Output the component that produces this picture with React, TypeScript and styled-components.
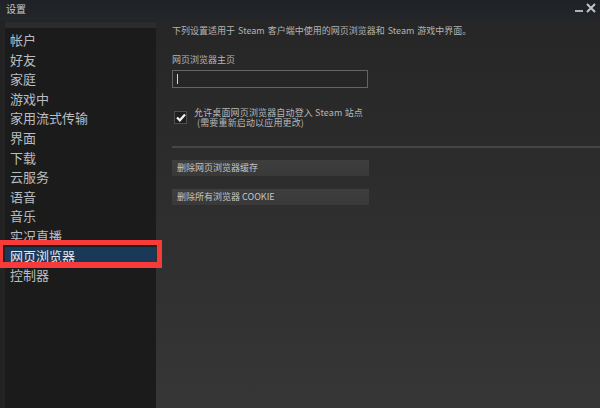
import React, { useState } from "react";
import styled, { createGlobalStyle } from "styled-components";

const GlobalStyle = createGlobalStyle`
  html, body {
    margin: 0;
    padding: 0;
    background: #232323;
  }
  body {
    font-family: "Noto Sans CJK SC", "Noto Sans", "Liberation Sans", sans-serif;
  }
`;

const Window = styled.div`
  position: relative;
  width: 600px;
  height: 408px;
  display: flex;
  flex-direction: column;
  background: #232323;
  overflow: hidden;
`;

const TitleBar = styled.div`
  height: 21px;
  flex-shrink: 0;
  display: flex;
  align-items: center;
  padding: 0 3px 0 6px;
  background: linear-gradient(#1e2125, #24262a);
`;

const Title = styled.div`
  flex: 1;
  font-size: 10px;
  color: #c8c8c8;
  line-height: 1;
  margin-top: -3px;
`;

const TitleButton = styled.button`
  width: 12px;
  height: 12px;
  padding: 0;
  border: none;
  background: transparent;
  display: flex;
  align-items: center;
  justify-content: center;
  cursor: pointer;
  margin-top: -6px;
`;

const Body = styled.div`
  flex: 1;
  display: flex;
  padding-left: 5px;
`;

const Sidebar = styled.div`
  width: 151px;
  flex-shrink: 0;
  display: flex;
  flex-direction: column;
  background: #1b1b1b;
  border-top: 6px solid #2c2c2c;
  margin-top: 1px;
  padding-top: 3px;
  gap: 2.6px;
`;

const NavItem = styled.div<{ $active?: boolean }>`
  height: 17px;
  display: flex;
  align-items: center;
  padding-left: 5px;
  font-size: 13px;
  color: ${(p) => (p.$active ? "#e4e6e8" : "#b9bdc1")};
  background: ${(p) => (p.$active ? "#1a3857" : "transparent")};
  cursor: pointer;
  white-space: nowrap;
`;

const Highlight = styled.div`
  position: absolute;
  left: 0;
  top: 240px;
  width: 162px;
  height: 28px;
  box-sizing: border-box;
  border: 5px solid #f83a3a;
  border-left-width: 3px;
  border-bottom-width: 6px;
  pointer-events: none;
`;

const Content = styled.div`
  flex: 1;
  display: flex;
  flex-direction: column;
  padding: 5px 0 0 16px;
  background: linear-gradient(#262626, #363636);
  color: #b4b4b4;
  font-size: 9px;
`;

const Description = styled.div`
  line-height: 9px;
  white-space: nowrap;
  word-spacing: 1px;
`;

const Label = styled.div`
  margin-top: 20px;
  line-height: 9px;
`;

const TextInput = styled.div`
  margin-top: 6px;
  width: 196px;
  height: 18px;
  box-sizing: border-box;
  border: 1px solid #646464;
  background: #262626;
  display: flex;
  align-items: center;
  padding-left: 4px;
`;

const Caret = styled.div`
  width: 1px;
  height: 10px;
  background: #d8d8d8;
`;

const CheckRow = styled.div`
  margin-top: 20px;
  display: flex;
  align-items: flex-start;
  gap: 7px;
  padding-left: 2px;
`;

const CheckBox = styled.div`
  width: 13px;
  height: 13px;
  margin-top: 3px;
  box-sizing: border-box;
  border: 1px solid #4e4e4e;
  background: #1e1e1e;
  display: flex;
  align-items: center;
  justify-content: center;
`;

const CheckText = styled.div`
  display: flex;
  flex-direction: column;
  line-height: 10px;
  color: #b8b8b8;
  letter-spacing: 0.15px;
`;

const SubLine = styled.span`
  padding-left: 3px;
`;

const Divider = styled.div`
  margin-top: 18px;
  height: 2px;
  background: #454545;
`;

const ActionButton = styled.button<{ $first?: boolean }>`
  margin-top: ${(p) => (p.$first ? "12px" : "13px")};
  width: 197px;
  height: 16px;
  border: none;
  padding: 0 0 0 5px;
  text-align: left;
  font-family: inherit;
  font-size: 9px;
  line-height: 16px;
  color: #c4c4c4;
  background: linear-gradient(#3e3e3e, #393939);
  cursor: pointer;
`;

const navItems = [
  "帐户",
  "好友",
  "家庭",
  "游戏中",
  "家用流式传输",
  "界面",
  "下载",
  "云服务",
  "语音",
  "音乐",
  "实况直播",
  "网页浏览器",
  "控制器",
];

export default function App() {
  const [active, setActive] = useState("网页浏览器");
  const [checked, setChecked] = useState(true);

  return (
    <>
      <GlobalStyle />
      <Window>
        <TitleBar>
          <Title>设置</Title>
          <TitleButton aria-label="minimize">
            <svg width="8" height="8" viewBox="0 0 8 8">
              <rect x="0" y="6" width="8" height="2" fill="#b0b0b0" />
            </svg>
          </TitleButton>
          <TitleButton aria-label="close">
            <svg width="10" height="10" viewBox="0 0 10 10">
              <path d="M1 1 L9 9 M9 1 L1 9" stroke="#c4c4c4" strokeWidth="2" />
            </svg>
          </TitleButton>
        </TitleBar>
        <Body>
          <Sidebar>
            {navItems.map((item) => (
              <NavItem key={item} $active={item === active} onClick={() => setActive(item)}>
                {item}
              </NavItem>
            ))}
          </Sidebar>
          <Content>
            <Description>
              下列设置适用于 Steam 客户端中使用的网页浏览器和 Steam 游戏中界面。
            </Description>
            <Label>网页浏览器主页</Label>
            <TextInput>
              <Caret />
            </TextInput>
            <CheckRow onClick={() => setChecked(!checked)}>
              <CheckBox>
                {checked && (
                  <svg width="10" height="9" viewBox="0 0 10 9">
                    <path d="M1 4.5 L3.8 7.3 L9 1.5" fill="none" stroke="#f2f2f2" strokeWidth="2.2" />
                  </svg>
                )}
              </CheckBox>
              <CheckText>
                <span>允许桌面网页浏览器自动登入 Steam 站点</span>
                <SubLine>(需要重新启动以应用更改)</SubLine>
              </CheckText>
            </CheckRow>
            <Divider />
            <ActionButton $first>删除网页浏览器缓存</ActionButton>
            <ActionButton>删除所有浏览器 COOKIE</ActionButton>
          </Content>
        </Body>
        <Highlight />
      </Window>
    </>
  );
}
